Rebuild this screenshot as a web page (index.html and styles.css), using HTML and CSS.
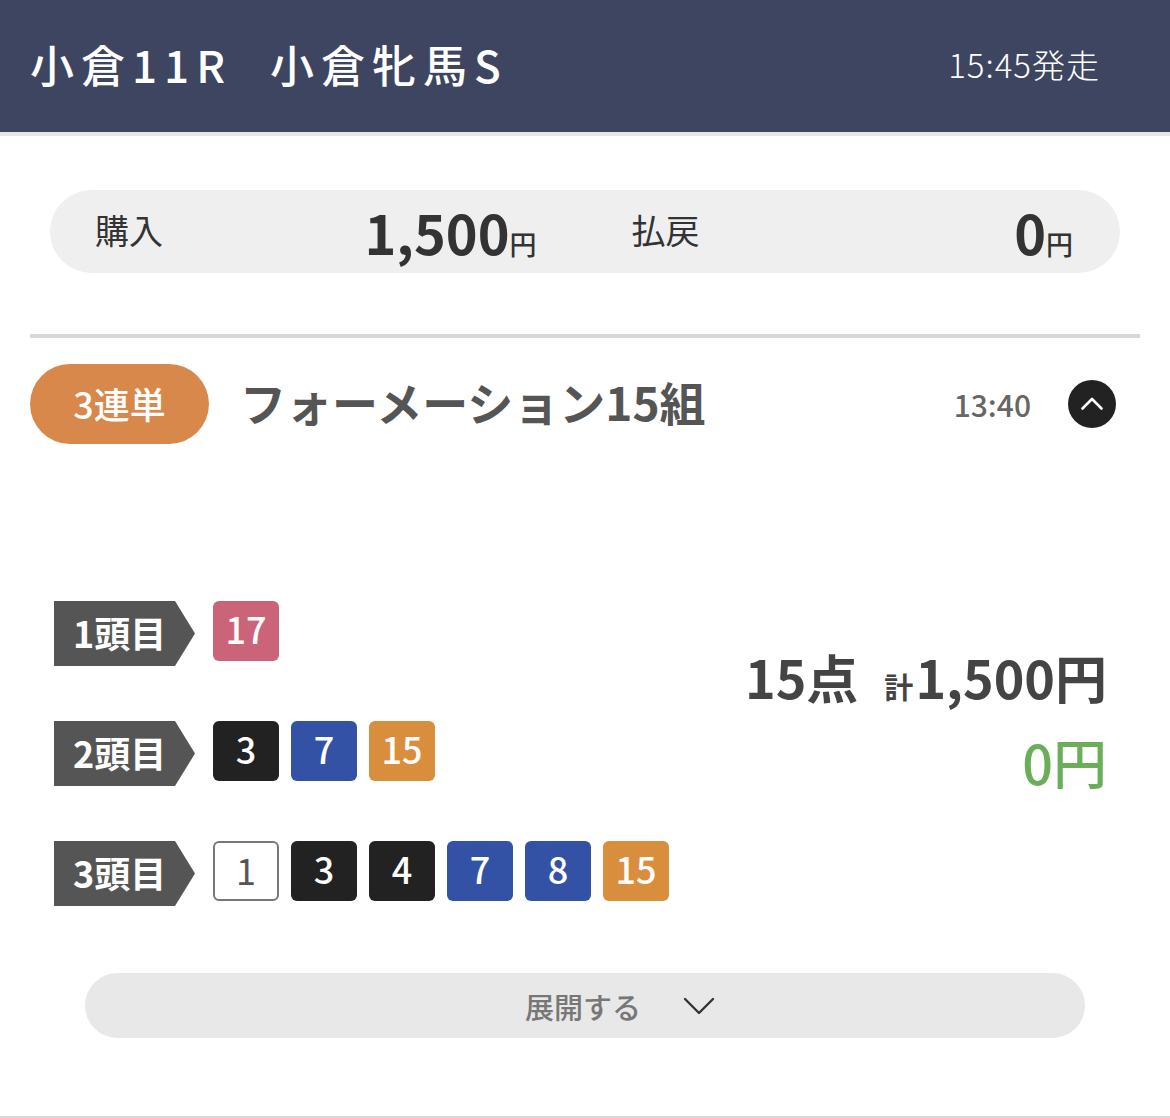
FILE: index.html
```html
<!DOCTYPE html>
<html lang="ja">
<head>
	<meta charset="UTF-8">
	<title>小倉11R 小倉牝馬S</title>
	<link rel="stylesheet" href="styles.css">
</head>
<body>
	<div id="wrap">
		<header class="race-head">
			<h1 class="race-title"><span>小倉11R</span><span class="race-name">小倉牝馬S</span></h1>
			<p class="race-time">15:45発走</p>
		</header>

		<div class="container">
			<div class="summary">
				<div class="sum-item">
					<span class="sum-label">購入</span>
					<span class="sum-value">1,500<small>円</small></span>
				</div>
				<div class="sum-item">
					<span class="sum-label">払戻</span>
					<span class="sum-value">0<small>円</small></span>
				</div>
			</div>

			<div class="bet">
				<div class="bet-head">
					<span class="bet-type">3連単</span>
					<span class="bet-title">フォーメーション15組</span>
					<span class="bet-time">13:40</span>
					<span class="toggle">
						<svg width="48" height="48" viewBox="0 0 48 48">
							<circle cx="24" cy="24" r="24" fill="#222"/>
							<path d="M14.5 28.5 L24 19 L33.5 28.5" fill="none" stroke="#fff" stroke-width="2.6" stroke-linecap="round" stroke-linejoin="round"/>
						</svg>
					</span>
				</div>

				<div class="bet-body">
					<div class="rows">
						<div class="row">
							<span class="pos">1頭目</span>
							<span class="num pink">17</span>
						</div>
						<div class="row">
							<span class="pos">2頭目</span>
							<span class="num black">3</span>
							<span class="num blue">7</span>
							<span class="num orange">15</span>
						</div>
						<div class="row">
							<span class="pos">3頭目</span>
							<span class="num white">1</span>
							<span class="num black">3</span>
							<span class="num black">4</span>
							<span class="num blue">7</span>
							<span class="num blue">8</span>
							<span class="num orange">15</span>
						</div>
					</div>
					<div class="totals">
						<p class="total-line">15点<span class="kei">計</span>1,500円</p>
						<p class="payout">0円</p>
					</div>
				</div>

				<div class="expand">
					<span>展開する</span>
					<svg width="32" height="22" viewBox="0 0 32 22">
						<path d="M2 4 L16 18 L30 4" fill="none" stroke="#333" stroke-width="2.4" stroke-linecap="round" stroke-linejoin="round"/>
					</svg>
				</div>
			</div>
		</div>
	</div>
</body>
</html>
```

FILE: styles.css
```css
*{
	margin: 0;
	padding: 0;
	box-sizing: border-box;
}
body{
	background-color: #fff;
	font-family: "Noto Sans CJK JP", "Noto Sans", sans-serif;
	color: #333;
}
#wrap{
	width: 1170px;
	height: 1118px;
	border-bottom: 2px solid #d9d9d9;
}
.race-head{
	height: 136px;
	padding: 0 70px 4px 30px;
	display: flex;
	align-items: center;
	justify-content: space-between;
	background-color: #3d4560;
	border-bottom: 4px solid #e6e6e6;
	color: #fff;
}
.race-title{
	font-size: 44px;
	font-weight: 500;
	letter-spacing: 7px;
	line-height: 1;
}
.race-title .race-name{
	margin-left: 38px;
}
.race-time{
	font-size: 33px;
	font-weight: 300;
	letter-spacing: 1px;
	line-height: 1;
}
.container{
	padding: 54px 30px 0;
}
.summary{
	margin: 0 20px;
	height: 83px;
	padding: 0 47px 0 45px;
	display: grid;
	grid-template-columns: 1fr 1fr;
	column-gap: 95px;
	align-items: center;
	background-color: #efefef;
	border-radius: 42px;
}
.sum-item{
	display: flex;
	justify-content: space-between;
	align-items: center;
}
.sum-label{
	font-size: 34px;
	color: #333;
	margin-top: -4px;
}
.sum-value{
	font-size: 54px;
	font-weight: 700;
	color: #333;
	line-height: 1;
}
.sum-value small{
	font-size: 27px;
	font-weight: 500;
}
.bet{
	margin-top: 61px;
	border-top: 4px solid #d8d8d8;
}
.bet-head{
	margin-top: 26px;
	display: flex;
	align-items: center;
}
.bet-type{
	width: 179px;
	height: 80px;
	line-height: 78px;
	text-align: center;
	background-color: #d9884b;
	border-radius: 40px;
	color: #fff;
	font-size: 36px;
	font-weight: 500;
}
.bet-title{
	margin-left: 31px;
	font-size: 46px;
	font-weight: 700;
	color: #555;
	line-height: 1;
	margin-top: -6px;
}
.bet-time{
	margin-left: auto;
	font-size: 30px;
	font-weight: 500;
	color: #666;
}
.toggle{
	display: flex;
	margin: 0 24px 0 37px;
}
.bet-body{
	padding: 157px 33px 0 24px;
	display: flex;
	justify-content: space-between;
}
.rows{
	display: flex;
	flex-direction: column;
	gap: 55px;
}
.row{
	display: flex;
	align-items: flex-start;
	gap: 12px;
}
.pos{
	width: 141px;
	height: 65px;
	padding-left: 19px;
	margin-right: 6px;
	line-height: 63px;
	background-color: #555;
	clip-path: polygon(0 0, 121px 0, 141px 50%, 121px 100%, 0 100%);
	color: #fff;
	font-size: 36px;
	font-weight: 700;
}
.num{
	width: 66px;
	height: 60px;
	line-height: 54px;
	text-align: center;
	border-radius: 6px;
	color: #fff;
	font-size: 36px;
	font-weight: 500;
}
.num.pink{
	background-color: #cc6479;
}
.num.black{
	background-color: #222;
}
.num.blue{
	background-color: #3452a5;
}
.num.orange{
	background-color: #d98e3e;
}
.num.white{
	border: 2px solid #777;
	color: #555;
	font-weight: 400;
	line-height: 52px;
}
.totals{
	padding-top: 50px;
	text-align: right;
}
.total-line{
	font-size: 52px;
	font-weight: 700;
	color: #444;
	line-height: 1;
}
.total-line .kei{
	font-size: 29px;
	margin: 0 2px 0 26px;
}
.payout{
	margin-top: 32px;
	font-size: 54px;
	font-weight: 500;
	color: #6aae5a;
	line-height: 1;
}
.expand{
	margin: 67px 55px 0;
	height: 65px;
	display: flex;
	align-items: center;
	justify-content: center;
	gap: 42px;
	background-color: #e8e8e8;
	border-radius: 33px;
	color: #777;
	font-size: 29px;
	font-weight: 500;
}
.expand span{
	margin-left: 70px;
}
```
